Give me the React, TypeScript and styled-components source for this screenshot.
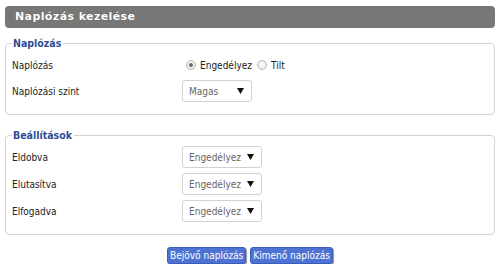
import React from "react";
import styled, { createGlobalStyle } from "styled-components";

const Global = createGlobalStyle`
  html, body { margin: 0; padding: 0; background: #fff; }
  body { font-family: "DejaVu Sans Condensed", "DejaVu Sans", sans-serif; }
`;

const Page = styled.div`
  padding: 6px 5px 0 5px;
  width: 490px;
`;

const TitleBar = styled.div`
  height: 22px;
  background: #777776;
  border-radius: 4px;
  color: #fff;
  font-family: "DejaVu Sans", sans-serif;
  font-weight: bold;
  font-size: 11px;
  letter-spacing: 0.4px;
  line-height: 22px;
  padding-left: 10px;
  text-shadow: 0 0 1px rgba(0,0,0,0.3);
`;

const Fieldset = styled.fieldset<{ $top: number; $gap: number }>`
  margin: ${(p) => p.$top}px 0 0 0;
  border: 1px solid #d4d4d4;
  border-radius: 4px;
  padding: 0 6px 12px 6px;
  display: flex;
  flex-direction: column;
  gap: ${(p) => p.$gap}px;
`;

const Legend = styled.legend`
  padding: 0 2px 0 1px;
  margin-left: 0;
  color: #2c4c95;
  font-family: "DejaVu Sans Condensed", "DejaVu Sans", sans-serif;
  font-weight: bold;
  font-size: 10.5px;
  line-height: 14px;
  margin-bottom: 4px;
`;

const Row = styled.div`
  display: flex;
  align-items: center;
  height: 22px;
`;

const Label = styled.div`
  width: 170px;
  flex: none;
  font-size: 10px;
  color: #222;
`;

const RadioGroup = styled.div`
  display: flex;
  align-items: center;
  padding-left: 4px;
  font-size: 10px;
  color: #222;
`;

const RadioOption = styled.label`
  display: flex;
  align-items: center;
  gap: 4px;
  margin-right: 5px;
`;

const RadioCircle = styled.span<{ $checked?: boolean }>`
  width: 10px;
  height: 10px;
  box-sizing: border-box;
  border-radius: 50%;
  border: 1px solid #b8b8b8;
  background: radial-gradient(circle at 50% 40%, #fdfdfd 0%, #e2e2e2 100%);
  display: flex;
  align-items: center;
  justify-content: center;
  &::after {
    content: "";
    display: ${(p) => (p.$checked ? "block" : "none")};
    width: 4px;
    height: 4px;
    border-radius: 50%;
    background: #6b6b6b;
  }
`;

const SelectBox = styled.div<{ $w: number }>`
  width: ${(p) => p.$w}px;
  height: 22px;
  box-sizing: border-box;
  border: 1px solid #d2d2d2;
  border-radius: 3px;
  background: #fff;
  display: flex;
  align-items: center;
  justify-content: space-between;
  padding: 0 7px 0 6px;
  font-size: 10px;
  color: #666;
`;

const Arrow = () => (
  <svg width="7" height="6" viewBox="0 0 7 6">
    <path d="M0 0 H7 L3.5 6 Z" fill="#111" />
  </svg>
);

const Buttons = styled.div`
  display: flex;
  justify-content: center;
  gap: 4px;
  margin-top: 12px;
`;

const Button = styled.button`
  height: 17px;
  box-sizing: border-box;
  border: 1px solid #3a5cbc;
  border-radius: 3px;
  background: #4d72d4;
  color: #fff;
  font-family: "DejaVu Sans Condensed", "DejaVu Sans", sans-serif;
  font-size: 10px;
  padding: 0 2px;
  box-shadow: 1px 1px 1px #9a9a9a;
  cursor: pointer;
`;

const Select = ({ value, w }: { value: string; w: number }) => (
  <SelectBox $w={w}>
    <span>{value}</span>
    <Arrow />
  </SelectBox>
);

export default function App() {
  return (
    <Page>
      <Global />
      <TitleBar>Naplózás kezelése</TitleBar>
      <Fieldset $top={8} $gap={4}>
        <Legend>Naplózás</Legend>
        <Row>
          <Label>Naplózás</Label>
          <RadioGroup>
            <RadioOption>
              <RadioCircle $checked />
              Engedélyez
            </RadioOption>
            <RadioOption>
              <RadioCircle />
              Tilt
            </RadioOption>
          </RadioGroup>
        </Row>
        <Row>
          <Label>Naplózási szint</Label>
          <Select value="Magas" w={70} />
        </Row>
      </Fieldset>
      <Fieldset $top={13} $gap={5}>
        <Legend>Beállítások</Legend>
        <Row>
          <Label>Eldobva</Label>
          <Select value="Engedélyez" w={80} />
        </Row>
        <Row>
          <Label>Elutasítva</Label>
          <Select value="Engedélyez" w={80} />
        </Row>
        <Row>
          <Label>Elfogadva</Label>
          <Select value="Engedélyez" w={80} />
        </Row>
      </Fieldset>
      <Buttons>
        <Button>Bejövő naplózás</Button>
        <Button>Kimenő naplózás</Button>
      </Buttons>
    </Page>
  );
}
